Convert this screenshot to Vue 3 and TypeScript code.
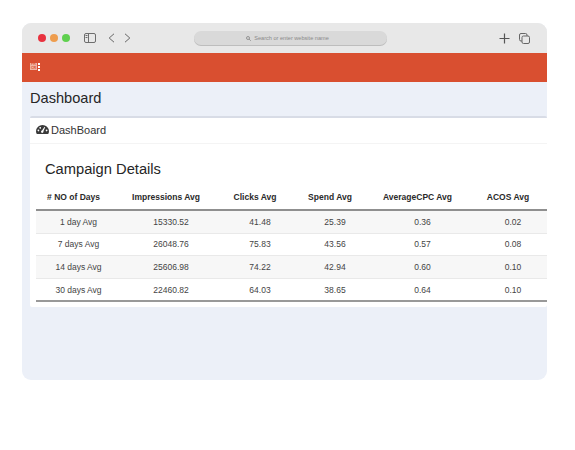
<script setup lang="ts">
interface Row { label: string; imp: string; clicks: string; spend: string; cpc: string; acos: string }
const heads: string[] = ['# NO of Days', 'Impressions Avg', 'Clicks Avg', 'Spend Avg', 'AverageCPC Avg', 'ACOS Avg']
const rows: Row[] = [
  { label: '1 day Avg', imp: '15330.52', clicks: '41.48', spend: '25.39', cpc: '0.36', acos: '0.02' },
  { label: '7 days Avg', imp: '26048.76', clicks: '75.83', spend: '43.56', cpc: '0.57', acos: '0.08' },
  { label: '14 days Avg', imp: '25606.98', clicks: '74.22', spend: '42.94', cpc: '0.60', acos: '0.10' },
  { label: '30 days Avg', imp: '22460.82', clicks: '64.03', spend: '38.65', cpc: '0.64', acos: '0.10' }
]
</script>

<template>
  <div class="stage">
    <div class="window">
      <div class="chrome">
        <div class="lights">
          <span class="light red"></span>
          <span class="light amber"></span>
          <span class="light green"></span>
        </div>
        <svg class="sidebar" width="12" height="10" viewBox="0 0 12 10" fill="none" stroke="#6e6e6e" stroke-width="1">
          <rect x="0.5" y="0.5" width="11" height="9" rx="1.5" />
          <line x1="4.5" y1="0.5" x2="4.5" y2="9.5" />
          <rect x="1.5" y="2" width="2" height="1" fill="#6e6e6e" stroke="none" />
          <rect x="1.5" y="4" width="2" height="1" fill="#6e6e6e" stroke="none" />
        </svg>
        <svg class="chev first" width="7" height="10" viewBox="0 0 7 10" fill="none" stroke="#666" stroke-width="1"><path d="M6 0.8 L1.2 5 L6 9.2" /></svg>
        <svg class="chev second" width="7" height="10" viewBox="0 0 7 10" fill="none" stroke="#666" stroke-width="1"><path d="M1 0.8 L5.8 5 L1 9.2" /></svg>
        <div class="address">
          <svg width="5" height="5" viewBox="0 0 5 5" fill="none" stroke="#777" stroke-width="0.7"><circle cx="2" cy="2" r="1.5" /><line x1="3.1" y1="3.1" x2="4.8" y2="4.8" /></svg>
          <span>Search or enter website name</span>
        </div>
        <svg class="plus" width="11" height="11" viewBox="0 0 11 11" stroke="#555" stroke-width="1.2"><line x1="5.5" y1="0.5" x2="5.5" y2="10.5" /><line x1="0.5" y1="5.5" x2="10.5" y2="5.5" /></svg>
        <svg class="tabs" width="11" height="11" viewBox="0 0 11 11" fill="none" stroke="#666" stroke-width="1"><rect x="0.5" y="0.5" width="7.5" height="7.5" rx="1.5" /><rect x="3" y="3" width="7.5" height="7.5" rx="1.5" fill="#e8e8e8" /></svg>
      </div>

      <div class="brandbar">
        <div class="logo">
          <div class="logo-box"><span>PR</span><span>CR</span></div>
          <div class="logo-dots"><i></i><i></i><i></i></div>
        </div>
      </div>

      <div class="page">
        <h1 class="title">Dashboard</h1>
        <div class="card">
          <div class="card-head">
            <svg width="13" height="9" viewBox="0 0 13 9">
              <path fill="#3a3a3a" fill-rule="evenodd" d="M6.5 0 A6.5 6.5 0 0 0 0 6.3 C0 7.3 0.3 8.2 0.8 9 H12.2 C12.7 8.2 13 7.3 13 6.3 A6.5 6.5 0 0 0 6.5 0 Z M6 5.5 L8.4 1.9 L9.2 2.3 L7.4 6.2 A1.2 1.2 0 1 1 6 5.5 Z M2.4 4.6 a0.8 0.8 0 1 0 0.01 0 Z M4.2 2.1 a0.8 0.8 0 1 0 0.01 0 Z M10.6 4.6 a0.8 0.8 0 1 0 0.01 0 Z" />
            </svg>
            <span>DashBoard</span>
          </div>
          <div class="card-body">
            <h2 class="subtitle">Campaign Details</h2>
            <table class="grid">
              <colgroup>
                <col class="c1" /><col class="c2" /><col class="c3" /><col class="c4" /><col class="c5" /><col class="c6" />
              </colgroup>
              <thead>
                <tr><th v-for="h in heads" :key="h">{{ h }}</th></tr>
              </thead>
              <tbody>
                <tr v-for="r in rows" :key="r.label">
                  <td>{{ r.label }}</td>
                  <td>{{ r.imp }}</td>
                  <td>{{ r.clicks }}</td>
                  <td>{{ r.spend }}</td>
                  <td>{{ r.cpc }}</td>
                  <td>{{ r.acos }}</td>
                </tr>
              </tbody>
            </table>
          </div>
        </div>
      </div>
    </div>
  </div>
</template>

<style>
html, body { margin: 0; background: #fff; }
</style>

<style scoped>
.stage {
  width: 575px;
  height: 450px;
  padding: 23px 28px 0 22px;
  box-sizing: border-box;
  font-family: "Liberation Sans", Arial, sans-serif;
  color: #333;
  overflow: hidden;
}
.window {
  width: 525px;
  height: 357px;
  border-radius: 9px;
  overflow: hidden;
  background: #ecf0f8;
  display: flex;
  flex-direction: column;
}
.chrome {
  height: 30px;
  flex: none;
  background: #e8e8e8;
  display: flex;
  align-items: center;
  padding-left: 16px;
  box-sizing: border-box;
}
.lights { display: flex; gap: 4px; }
.light { width: 8px; height: 8px; border-radius: 50%; }
.red { background: #e8323f; }
.amber { background: #ee9d4e; }
.green { background: #5fd04f; }
.sidebar { margin-left: 14px; }
.chev.first { margin-left: 12px; }
.chev.second { margin-left: 9px; }
.address {
  margin-left: 63px;
  width: 193px;
  height: 14px;
  padding-right: 6px;
  box-sizing: border-box;
  border-radius: 7px;
  background: #d9d9d9;
  box-shadow: 0 1px 0 #bdbdbd;
  display: flex;
  align-items: center;
  justify-content: center;
  gap: 3px;
  font-size: 5.6px;
  color: #8a8a8a;
}
.plus { margin-left: 112px; }
.tabs { margin-left: 9px; }
.brandbar {
  height: 29px;
  flex: none;
  background: #d94f30;
  display: flex;
  align-items: center;
  padding-left: 8px;
  padding-bottom: 2px;
  box-sizing: border-box;
}
.logo { display: flex; align-items: center; gap: 1px; }
.logo-box {
  display: flex;
  flex-direction: column;
  font-size: 3.5px;
  line-height: 3.5px;
  font-weight: 700;
  color: #d94f30;
  background: #f0b5a2;
  padding: 0 1px;
}
.logo-dots { display: flex; flex-direction: column; gap: 1px; }
.logo-dots i { display: block; width: 2px; height: 2px; background: #fff; }
.page {
  flex: 1;
  padding: 0 0 0 8px;
  overflow: hidden;
}
.title {
  margin: 7px 0 0;
  font-size: 14.6px;
  line-height: 18px;
  font-weight: 400;
  color: #262626;
}
.card {
  margin-top: 9px;
  background: #fff;
  border-top: 2px solid #d8dce6;
  border-radius: 2px;
  padding-bottom: 5px;
}
.card-head {
  height: 26px;
  padding: 0 0 2px 6px;
  box-sizing: border-box;
  display: flex;
  align-items: center;
  gap: 2px;
  font-size: 11px;
  color: #333;
  border-bottom: 1px solid #f4f4f4;
}
.card-body { padding: 0 0 0 6px; }
.subtitle {
  margin: 16px 0 0 9px;
  font-size: 14.7px;
  line-height: 18px;
  font-weight: 400;
  color: #262626;
}
.grid {
  margin-top: 9px;
  width: 516px;
  border-collapse: collapse;
  table-layout: fixed;
  font-size: 8.5px;
  text-align: center;
  color: #444;
}
.c1 { width: 75px; }
.c2 { width: 110px; }
.c3 { width: 68px; }
.c4 { width: 82px; }
.c5 { width: 93px; }
.c6 { width: 88px; }
th {
  height: 19px;
  padding: 0 0 3px;
  font-weight: 700;
  font-size: 8.5px;
  color: #2a2a2a;
  border-bottom: 2px solid #8f8f8f;
}
td {
  height: 21.6px;
  padding: 0 0 0 10px;
  border-bottom: 1px solid #e9e9e9;
}
tbody tr:nth-child(odd) td { background: #f7f7f7; }
tbody tr:last-child td { border-bottom: 2px solid #999; }
</style>
